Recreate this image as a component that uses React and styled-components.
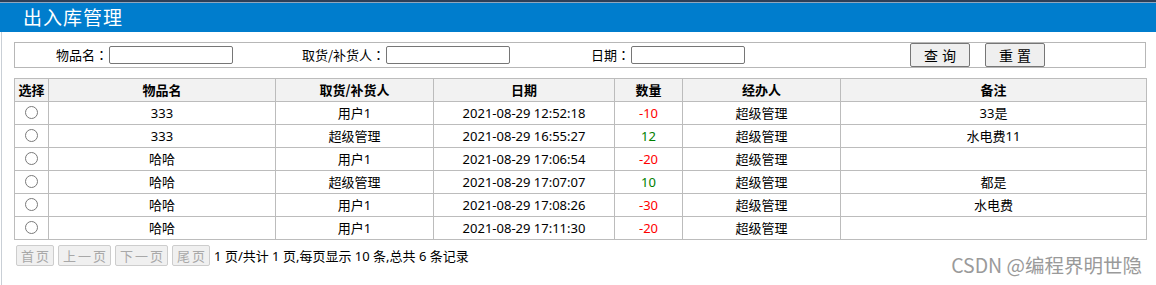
import styled, { createGlobalStyle } from "styled-components";

const GlobalStyle = createGlobalStyle`
  body {
    margin: 0;
    background: #fff;
    font-family: "Noto Sans", "Noto Sans CJK SC", sans-serif;
    font-size: 13px;
    color: #000;
  }
`;

const Page = styled.div`
  position: relative;
  width: 1156px;
  height: 285px;
  overflow: hidden;
`;

const TitleBar = styled.div`
  height: 30px;
  background: #007dcd;
  border-top: 2px solid #2d3f58;
  box-shadow: inset 0 1px 0 #8fa6bf;
  display: flex;
  align-items: center;
  padding-left: 23px;
`;

const Title = styled.h1`
  margin: 0;
  font-family: "Noto Sans CJK SC", sans-serif;
  font-size: 19px;
  font-weight: 400;
  color: #fff;
  line-height: 30px;
  letter-spacing: 1px;
`;

const Content = styled.div`
  margin-left: 1px;
  border-left: 1px solid #c9cfd6;
  padding: 10px 10px 0 12px;
  height: 252px;
`;

const SearchForm = styled.form`
  display: flex;
  align-items: center;
  height: 24px;
  border: 1px solid #b7b7b7;
  margin: 0;
`;

const Label = styled.label`
  width: ${(p) => p.$w}px;
  text-align: right;
  margin-right: 1px;
  line-height: 18px;
  white-space: nowrap;
  font-family: "Noto Sans CJK SC", sans-serif;
`;

const Colon = styled.span`
  font-family: "Noto Sans CJK JP", sans-serif;
`;

const TextInput = styled.input`
  box-sizing: border-box;
  width: ${(p) => p.$w}px;
  height: 18px;
  border: 1px solid #767676;
  border-radius: 2px;
  padding: 0 3px;
  font: inherit;
`;

const Buttons = styled.div`
  display: flex;
  gap: 15px;
  margin-left: 165px;
`;

const Button = styled.button`
  box-sizing: border-box;
  width: 60px;
  height: 24px;
  border: 1px solid #767676;
  border-radius: 2px;
  background: #efefef;
  font-family: "Noto Sans CJK SC", sans-serif;
  font-size: 14px;
  letter-spacing: 4px;
  padding: 0 0 0 4px;
  color: #000;
`;

const Table = styled.table`
  margin-top: 10px;
  width: 1133px;
  border-collapse: collapse;
  table-layout: fixed;
`;

const HeadCell = styled.th`
  width: ${(p) => p.$w - 1}px;
  height: 22px;
  padding: 0;
  border: 1px solid #bcbcbc;
  background: #f2f2f2;
  font-family: "Noto Sans CJK SC", sans-serif;
  font-size: 13px;
  font-weight: 700;
  line-height: 20px;
`;

const Cell = styled.td`
  height: 22px;
  padding: 0;
  border: 1px solid #bcbcbc;
  text-align: center;
  line-height: 20px;
  color: ${(p) => p.$color || "#000"};
  white-space: nowrap;
`;

const Radio = styled.input.attrs({ type: "radio" })`
  appearance: none;
  display: block;
  margin: 0 auto 2px;
  width: 13px;
  height: 13px;
  border: 1px solid #7a7a7a;
  border-radius: 50%;
  background: #fff;
`;

const Pager = styled.div`
  display: flex;
  align-items: center;
  gap: 4px;
  margin-top: 5px;
  padding-left: 2px;
`;

const PageButton = styled.button`
  box-sizing: border-box;
  height: 21px;
  padding: 0 2px 0 4px;
  border: 1px solid #cdcdcd;
  border-radius: 2px;
  background: #f0f0f0;
  color: #a8a8a8;
  font-family: "Noto Sans CJK SC", sans-serif;
  font-size: 13px;
  letter-spacing: 2px;
`;

const PageInfo = styled.span`
  white-space: nowrap;
`;

const Watermark = styled.div`
  position: absolute;
  right: 14px;
  top: 251px;
  font-family: "Noto Sans CJK SC", sans-serif;
  font-size: 19.5px;
  line-height: 28px;
  color: #9a9a9a;
  text-shadow: 0 0 1px #fff;
`;

const columns = [
  ["选择", 34],
  ["物品名", 227],
  ["取货/补货人", 158],
  ["日期", 181],
  ["数量", 68],
  ["经办人", 158],
  ["备注", 306],
];

const rows = [
  ["333", "用户1", "2021-08-29 12:52:18", -10, "超级管理", "33是"],
  ["333", "超级管理", "2021-08-29 16:55:27", 12, "超级管理", "水电费11"],
  ["哈哈", "用户1", "2021-08-29 17:06:54", -20, "超级管理", ""],
  ["哈哈", "超级管理", "2021-08-29 17:07:07", 10, "超级管理", "都是"],
  ["哈哈", "用户1", "2021-08-29 17:08:26", -30, "超级管理", "水电费"],
  ["哈哈", "用户1", "2021-08-29 17:11:30", -20, "超级管理", ""],
];

export default function App() {
  return (
    <Page>
      <GlobalStyle />
      <TitleBar>
        <Title>出入库管理</Title>
      </TitleBar>
      <Content>
        <SearchForm>
          <Label $w={93}>物品名<Colon>：</Colon></Label>
          <TextInput $w={124} />
          <Label $w={152}>取货/补货人<Colon>：</Colon></Label>
          <TextInput $w={124} />
          <Label $w={120}>日期<Colon>：</Colon></Label>
          <TextInput $w={114} />
          <Buttons>
            <Button type="button">查询</Button>
            <Button type="button">重置</Button>
          </Buttons>
        </SearchForm>
        <Table>
          <thead>
            <tr>
              {columns.map(([name, w]) => (
                <HeadCell key={name} $w={w}>{name}</HeadCell>
              ))}
            </tr>
          </thead>
          <tbody>
            {rows.map((r, i) => (
              <tr key={i}>
                <Cell><Radio name="sel" /></Cell>
                <Cell>{r[0]}</Cell>
                <Cell>{r[1]}</Cell>
                <Cell>{r[2]}</Cell>
                <Cell $color={r[3] < 0 ? "#ff0000" : "#008000"}>{r[3]}</Cell>
                <Cell>{r[4]}</Cell>
                <Cell>{r[5]}</Cell>
              </tr>
            ))}
          </tbody>
        </Table>
        <Pager>
          <PageButton disabled>首页</PageButton>
          <PageButton disabled>上一页</PageButton>
          <PageButton disabled>下一页</PageButton>
          <PageButton disabled>尾页</PageButton>
          <PageInfo>1 页/共计 1 页,每页显示 10 条,总共 6 条记录</PageInfo>
        </Pager>
      </Content>
      <Watermark>CSDN @编程界明世隐</Watermark>
    </Page>
  );
}
